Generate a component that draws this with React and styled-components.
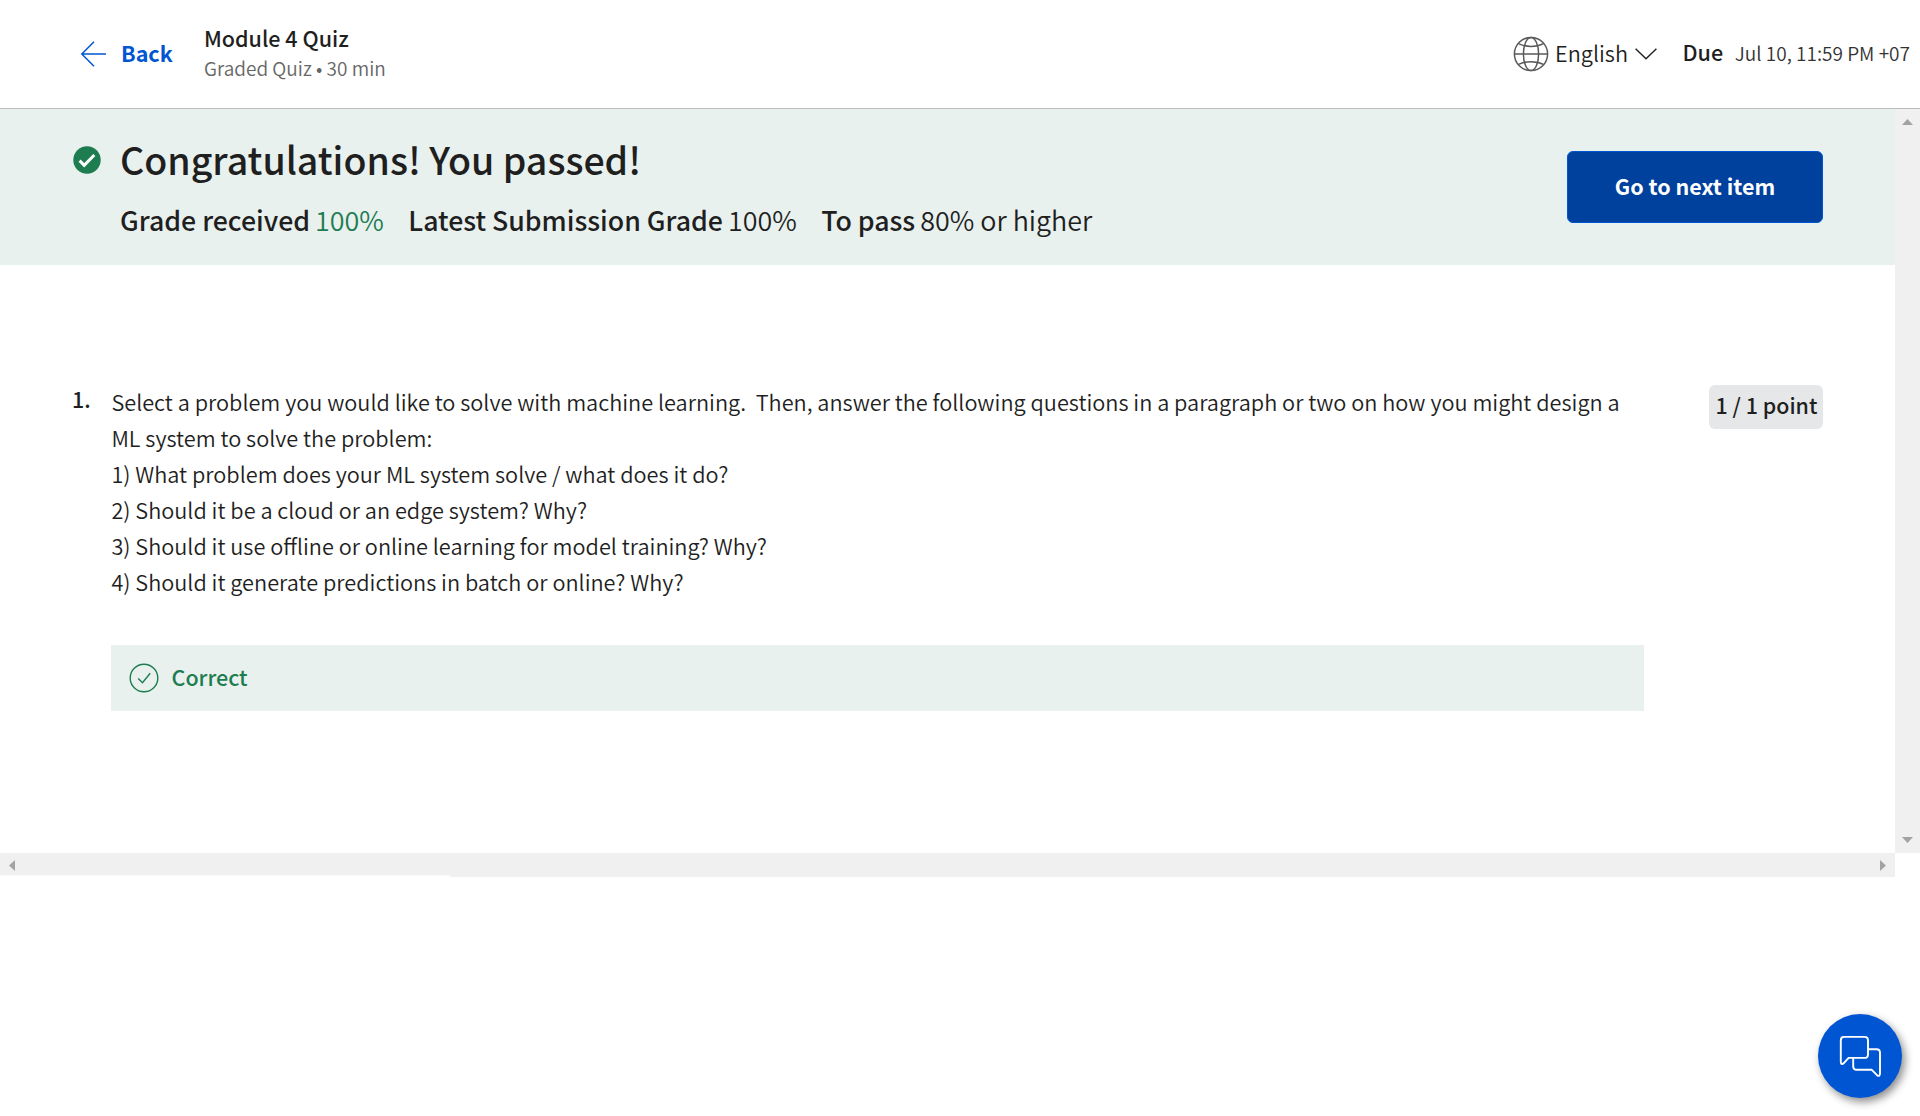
import React from 'react';
import styled, { createGlobalStyle } from 'styled-components';

const Global = createGlobalStyle`
  * { box-sizing: border-box; }
  body {
    margin: 0;
    background: #fff;
    color: #1f1f1f;
    font-family: "Noto Sans CJK JP", "Noto Sans", sans-serif;
    font-weight: 350;
    font-size: 21.7px;
    overflow: hidden;
  }
`;

const Page = styled.div`
  height: 1116px;
  display: flex;
  flex-direction: column;
`;

const Header = styled.header`
  height: 109px;
  flex: none;
  display: flex;
  align-items: flex-start;
  border-bottom: 1px solid #bbb;
  padding: 23px 10px 0 80px;
  white-space: nowrap;
`;

const BackLink = styled.a`
  display: flex;
  align-items: center;
  gap: 15px;
  height: 60px;
  width: 124px;
  color: #0056d2;
  font-size: 21.5px;
  font-weight: 700;
  line-height: 30px;

  svg { margin-top: 2px; }
  span { padding-bottom: 1px; }
`;

const TitleBlock = styled.div`
  display: flex;
  flex-direction: column;
`;

const Title = styled.div`
  font-size: 21.5px;
  font-weight: 500;
  line-height: 30px;
`;

const Subtitle = styled.div`
  font-size: 19px;
  line-height: 30px;
  color: #666;
`;

const HeaderRight = styled.div`
  margin-left: auto;
  display: flex;
  align-items: center;
  height: 60px;
`;

const Language = styled.div`
  display: flex;
  align-items: center;
  line-height: 30px;
  margin-right: 25.5px;

  svg { margin-top: 1px; }
  span { margin: 0 7px 0 6px; }
`;

const DueLabel = styled.span`
  font-size: 21.6px;
  font-weight: 500;
  line-height: 30px;
  padding-bottom: 2px;
  margin-right: 11.5px;
`;

const DueDate = styled.span`
  font-size: 19.05px;
  line-height: 30px;
  color: #333;
`;

const Viewport = styled.div`
  height: 744px;
  flex: none;
  display: flex;
`;

const Content = styled.main`
  flex: 1;
  min-width: 0;
`;

const Banner = styled.section`
  height: 156px;
  background: #e8f1ee;
  display: flex;
  justify-content: space-between;
  padding: 26px 72px 0 73px;
  white-space: nowrap;
`;

const BannerMain = styled.div`
  display: flex;
  gap: 19px;

  > svg { margin-top: 10.5px; }
`;

const Heading = styled.h1`
  margin: 1px 0 0;
  font-size: 37.5px;
  font-weight: 500;
  line-height: 46px;
`;

const Grades = styled.div`
  display: flex;
  gap: 24.3px;
  margin-top: 18px;
  font-size: 26.9px;
  line-height: 40px;
`;

const Grade = styled.div`
  display: flex;
  gap: 5px;

  strong { font-weight: 500; font-size: 26.7px; }
  span { color: ${(p) => (p.$passed ? '#1d7c50' : 'inherit')}; }
`;

const NextButton = styled.button`
  width: 256px;
  height: 72px;
  margin-top: 16px;
  padding: 0 0 4px;
  border: 1px solid #0056d2;
  border-radius: 6px;
  background: #00419e;
  color: #fff;
  font: 700 21.5px "Noto Sans CJK JP", "Noto Sans", sans-serif;
`;

const Question = styled.section`
  display: flex;
  padding: 118px 72px 0 72px;
`;

const Number = styled.div`
  width: 39px;
  font-size: 21.5px;
  font-weight: 500;
  line-height: 36px;
  margin-top: -2px;
`;

const QuestionBody = styled.div`
  width: 1533px;
`;

const Prompt = styled.div`
  padding: 1px 0 0 0.4px;
  font-size: 21.71px;
  line-height: 36px;
  white-space: pre;
`;

const Points = styled.div`
  margin: 2px 0 0 auto;
  padding-left: 1px;
  width: 114px;
  height: 44px;
  border-radius: 6px;
  background: #e5e7e8;
  font-size: 21.4px;
  font-weight: 500;
  line-height: 40px;
  text-align: center;
  white-space: nowrap;
`;

const Feedback = styled.div`
  height: 66px;
  margin-top: 45px;
  padding-left: 18px;
  background: #e8f1ee;
  color: #1d7c50;
  display: flex;
  align-items: center;
  gap: 12.5px;
  font-size: 21.5px;
  font-weight: 500;
  line-height: 30px;

  span { padding-bottom: 3px; }
`;

const VScroll = styled.div`
  width: 25px;
  background: #f0f0f0;
  display: flex;
  flex-direction: column;
  justify-content: space-between;
  align-items: center;
  padding: 10px 0;
`;

const HScroll = styled.div`
  position: relative;
  width: 1895px;
  height: 24px;
  flex: none;
  background: #f0f0f0;
  display: flex;
  justify-content: space-between;
  align-items: flex-start;
  padding: 7px 9px;
`;

const StatusEdge = styled.div`
  position: absolute;
  left: 0;
  bottom: 0;
  width: 450px;
  height: 2px;
  background: #fff;
  border-top: 1px solid #f8f8f8;
`;

const shapes = {
  up: ['11px', '6px', '50% 0, 100% 100%, 0 100%'],
  down: ['11px', '6px', '0 0, 100% 0, 50% 100%'],
  left: ['6px', '11px', '0 50%, 100% 0, 100% 100%'],
  right: ['6px', '11px', '0 0, 100% 50%, 0 100%'],
};

const Arrow = styled.div`
  width: ${(p) => shapes[p.$dir][0]};
  height: ${(p) => shapes[p.$dir][1]};
  clip-path: polygon(${(p) => shapes[p.$dir][2]});
  background: #a3a3a3;
`;

const ChatButton = styled.button`
  position: fixed;
  left: 1818px;
  top: 1013.5px;
  width: 84px;
  height: 84px;
  padding: 0;
  border: 0;
  border-radius: 50%;
  background: #0056d2;
  box-shadow: 3px 4px 8px rgba(0, 0, 0, 0.45);

  svg { display: block; }
`;

const BackArrow = () => (
  <svg width="26" height="26" viewBox="0 0 26 26" fill="none" stroke="#0056d2" strokeWidth="1.5">
    <path d="M26 13H2M14 .8 1.8 13 14 25.2" />
  </svg>
);

const Globe = () => (
  <svg width="36" height="36" viewBox="0 0 36 36" fill="none" stroke="#5a5a5a" strokeWidth="1.5">
    <circle cx="18" cy="18" r="16.6" />
    <ellipse cx="18" cy="18" rx="7.6" ry="16.6" />
    <path d="M1.4 18h33.2M5.6 7.6c7 3.7 17.8 3.7 24.8 0M5.6 28.4c7-3.7 17.8-3.7 24.8 0" />
  </svg>
);

const Chevron = () => (
  <svg width="22" height="12" viewBox="0 0 22 12" fill="none" stroke="#1f1f1f" strokeWidth="1.4">
    <path d="M.6.8 11 10.8 21.4.8" />
  </svg>
);

const PassedIcon = () => (
  <svg width="28" height="28" viewBox="0 0 28 28">
    <circle cx="14" cy="14" r="13.7" fill="#1d7c50" />
    <path d="m6.6 14.6 4.6 4.7L21.3 9" fill="none" stroke="#fff" strokeWidth="3" />
  </svg>
);

const CorrectIcon = () => (
  <svg width="30" height="30" viewBox="0 0 30 30" fill="none" stroke="#1d7c50" strokeWidth="1.4">
    <circle cx="15" cy="15" r="13.8" />
    <path d="m9.2 15.4 4.3 4.3L21.2 10.3" />
  </svg>
);

const ChatIcon = () => (
  <svg width="84" height="84" viewBox="0 0 84 84" fill="none" stroke="#fff" strokeWidth="1.9" strokeLinejoin="round">
    <path d="M26 22.9H46.5Q50 22.9 50 26.4V40.4Q50 43.9 46.5 43.9H30.6L25.6 49.4Q22.8 51.3 22.8 47.5V26.4Q22.8 22.9 26 22.9Z" />
    <path d="M50.2 35.2H58.5Q62 35.2 62 38.7V59Q62 63.3 59 61.2L53.8 55.8H38.7Q35.2 55.8 35.2 52.3V44" />
  </svg>
);

const prompt = [
  'Select a problem you would like to solve with machine learning.\u00a0 Then, answer the following questions in a paragraph or two on how you might design a',
  'ML system to solve the problem:',
  '1) What problem does your ML system solve / what does it do?',
  '2) Should it be a cloud or an edge system? Why?',
  '3) Should it use offline or online learning for model training? Why?',
  '4) Should it generate predictions in batch or online? Why?',
];

export default function App() {
  return (
    <Page>
      <Global />
      <Header>
        <BackLink><BackArrow /><span>Back</span></BackLink>
        <TitleBlock>
          <Title>Module 4 Quiz</Title>
          <Subtitle>Graded Quiz • 30 min</Subtitle>
        </TitleBlock>
        <HeaderRight>
          <Language><Globe /><span>English</span><Chevron /></Language>
          <DueLabel>Due</DueLabel>
          <DueDate>Jul 10, 11:59 PM +07</DueDate>
        </HeaderRight>
      </Header>
      <Viewport>
        <Content>
          <Banner>
            <BannerMain>
              <PassedIcon />
              <div>
                <Heading>Congratulations! You passed!</Heading>
                <Grades>
                  <Grade $passed><strong>Grade received</strong><span>100%</span></Grade>
                  <Grade><strong>Latest Submission Grade</strong><span>100%</span></Grade>
                  <Grade><strong>To pass</strong><span>80% or higher</span></Grade>
                </Grades>
              </div>
            </BannerMain>
            <NextButton>Go to next item</NextButton>
          </Banner>
          <Question>
            <Number>1.</Number>
            <QuestionBody>
              <Prompt>{prompt.map((line) => <div key={line}>{line}</div>)}</Prompt>
              <Feedback><CorrectIcon /><span>Correct</span></Feedback>
            </QuestionBody>
            <Points>1 / 1 point</Points>
          </Question>
        </Content>
        <VScroll><Arrow $dir="up" /><Arrow $dir="down" /></VScroll>
      </Viewport>
      <HScroll><Arrow $dir="left" /><Arrow $dir="right" /><StatusEdge /></HScroll>
      <ChatButton aria-label="Chat"><ChatIcon /></ChatButton>
    </Page>
  );
}
